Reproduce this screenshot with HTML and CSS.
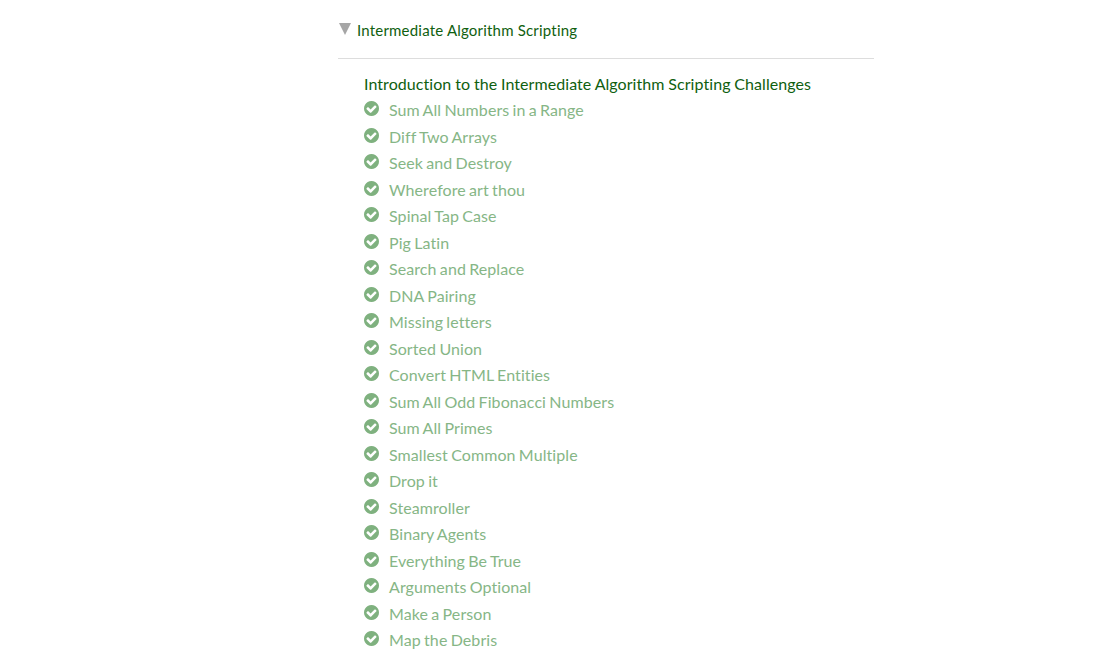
FILE: index.html
```html
<!DOCTYPE html>
<html lang="en">
<head>
<meta charset="utf-8">
<title>Intermediate Algorithm Scripting</title>
<link rel="stylesheet" href="styles.css">
</head>
<body>
<svg class="defs" width="0" height="0" aria-hidden="true">
  <symbol id="check" viewBox="0 0 1536 1536">
    <path d="M1284 606q0-28-18-46l-91-90q-19-19-45-19t-45 19L677 877 451 651q-19-19-45-19t-45 19l-91 90q-18 18-18 46 0 27 18 45l362 362q19 19 45 19 27 0 46-19l543-543q18-18 18-45zm252 162q0 209-103 385.500T1153.500 1433 768 1536t-385.500-103T103 1153.500 0 768t103-385.500T382.500 103 768 0t385.500 103T1433 382.500 1536 768z"/>
  </symbol>
</svg>
<main class="map">
  <h3 class="block-title"><span class="caret"></span><a class="link">Intermediate Algorithm Scripting</a></h3>
  <p class="intro">Introduction to the Intermediate Algorithm Scripting Challenges</p>
  <ul class="challenges">
    <li class="challenge"><svg class="icon"><use href="#check"/></svg><span>Sum All Numbers in a Range</span></li>
    <li class="challenge"><svg class="icon"><use href="#check"/></svg><span>Diff Two Arrays</span></li>
    <li class="challenge"><svg class="icon"><use href="#check"/></svg><span>Seek and Destroy</span></li>
    <li class="challenge"><svg class="icon"><use href="#check"/></svg><span>Wherefore art thou</span></li>
    <li class="challenge"><svg class="icon"><use href="#check"/></svg><span>Spinal Tap Case</span></li>
    <li class="challenge"><svg class="icon"><use href="#check"/></svg><span>Pig Latin</span></li>
    <li class="challenge"><svg class="icon"><use href="#check"/></svg><span>Search and Replace</span></li>
    <li class="challenge"><svg class="icon"><use href="#check"/></svg><span>DNA Pairing</span></li>
    <li class="challenge"><svg class="icon"><use href="#check"/></svg><span>Missing letters</span></li>
    <li class="challenge"><svg class="icon"><use href="#check"/></svg><span>Sorted Union</span></li>
    <li class="challenge"><svg class="icon"><use href="#check"/></svg><span>Convert HTML Entities</span></li>
    <li class="challenge"><svg class="icon"><use href="#check"/></svg><span>Sum All Odd Fibonacci Numbers</span></li>
    <li class="challenge"><svg class="icon"><use href="#check"/></svg><span>Sum All Primes</span></li>
    <li class="challenge"><svg class="icon"><use href="#check"/></svg><span>Smallest Common Multiple</span></li>
    <li class="challenge"><svg class="icon"><use href="#check"/></svg><span>Drop it</span></li>
    <li class="challenge"><svg class="icon"><use href="#check"/></svg><span>Steamroller</span></li>
    <li class="challenge"><svg class="icon"><use href="#check"/></svg><span>Binary Agents</span></li>
    <li class="challenge"><svg class="icon"><use href="#check"/></svg><span>Everything Be True</span></li>
    <li class="challenge"><svg class="icon"><use href="#check"/></svg><span>Arguments Optional</span></li>
    <li class="challenge"><svg class="icon"><use href="#check"/></svg><span>Make a Person</span></li>
    <li class="challenge"><svg class="icon"><use href="#check"/></svg><span>Map the Debris</span></li>
  </ul>
</main>
</body>
</html>
```

FILE: styles.css
```css
body {
  margin: 0;
  background: #fff;
  color: #0f600f;
  font-family: Lato, sans-serif;
  font-size: 16px;
  font-variant-ligatures: none;
  overflow: hidden;
}

.defs {
  display: none;
}

.map {
  width: 536px;
  margin-left: 338px;
}

.block-title {
  display: flex;
  align-items: flex-start;
  gap: 6px;
  box-sizing: border-box;
  height: 59px;
  margin: 0;
  padding-top: 20px;
  border-bottom: 1px solid #ddd;
  font-size: 15px;
  font-weight: 400;
  letter-spacing: 0.200px;
  line-height: 20px;
}

.caret {
  width: 0;
  margin: 3px 0 0 1px;
  border: 6px solid transparent;
  border-top: 12px solid #a6a6a6;
  border-bottom: 0;
}

.intro {
  margin: 12px 0 0 26px;
  line-height: 26px;
  letter-spacing: 0.060px;
  word-spacing: -0.300px;
}

.challenges {
  margin: 0 0 0 26px;
  padding: 0;
  list-style: none;
}

.challenge {
  display: flex;
  align-items: flex-start;
  gap: 10px;
  height: 26.500px;
  line-height: 26.500px;
  letter-spacing: 0.080px;
  word-spacing: -0.900px;
  color: #86b686;
}

.icon {
  width: 15px;
  height: 15px;
  margin-top: 4px;
  fill: #7fb17f;
}
```
